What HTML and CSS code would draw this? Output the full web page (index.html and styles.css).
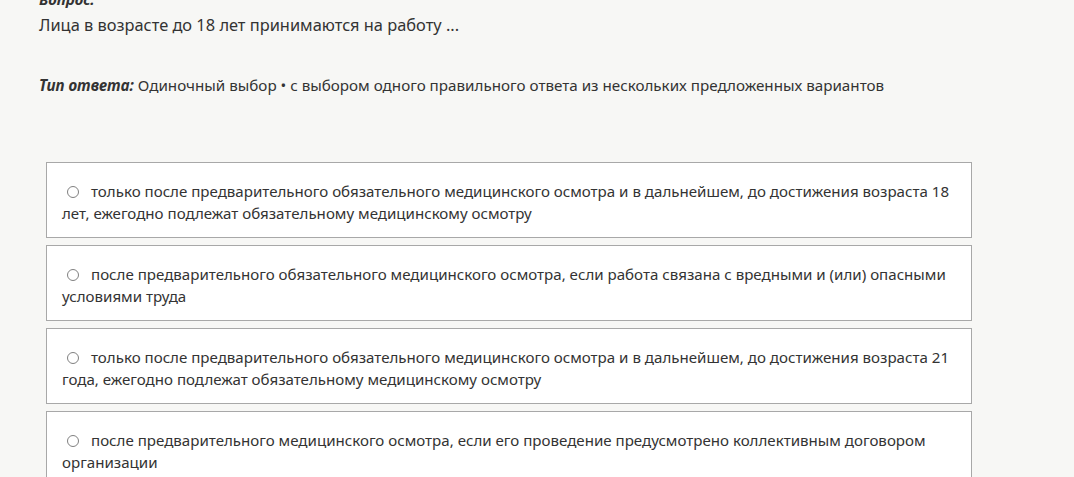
FILE: index.html
```html
<!DOCTYPE html>
<html lang="ru">
<head>
<meta charset="utf-8">
<title>Вопрос</title>
<link rel="stylesheet" href="styles.css">
</head>
<body>
<main class="quiz">
  <section class="question">
    <div class="label">Вопрос:</div>
    <div class="text">Лица в возрасте до 18 лет принимаются на работу ...</div>
    <div class="kind"><span class="kind-label">Тип ответа:</span> Одиночный выбор • с выбором одного правильного ответа из нескольких предложенных вариантов</div>
  </section>
  <ul class="answers">
    <li class="answer"><span class="radio"></span>только после предварительного обязательного медицинского осмотра и в дальнейшем, до достижения возраста 18 лет, ежегодно подлежат обязательному медицинскому осмотру</li>
    <li class="answer"><span class="radio"></span>после предварительного обязательного медицинского осмотра, если работа связана с вредными и (или) опасными условиями труда</li>
    <li class="answer"><span class="radio"></span>только после предварительного обязательного медицинского осмотра и в дальнейшем, до достижения возраста 21 года, ежегодно подлежат обязательному медицинскому осмотру</li>
    <li class="answer"><span class="radio"></span>после предварительного медицинского осмотра, если его проведение предусмотрено коллективным договором организации</li>
  </ul>
</main>
</body>
</html>
```

FILE: styles.css
```css
html, body {
  margin: 0;
  background: #f7f7f5;
}

body {
  font-family: "Noto Sans", "Open Sans", sans-serif;
  font-size: 15.1px;
  line-height: 22px;
  color: #333;
  overflow: hidden;
}

.quiz {
  margin-top: -9px;
  padding: 0 102px 0 39px;
}

.label {
  font-weight: bold;
  font-style: italic;
  font-size: 15px;
  line-height: 16px;
}

.text {
  margin-top: 6px;
  font-size: 16.4px;
  line-height: 24px;
}

.kind {
  margin-top: 37px;
  font-size: 15.2px;
}

.kind-label {
  font-weight: bold;
  font-style: italic;
}

.answers {
  list-style: none;
  margin: 66px 0 0 7px;
  padding: 0;
  display: flex;
  flex-direction: column;
  gap: 7px;
}

.answer {
  background: #fff;
  border: 1px solid #a8a8a8;
  padding: 17px 15px 13px;
}

.radio {
  display: inline-block;
  width: 10px;
  height: 10px;
  border: 1.4px solid #808080;
  border-radius: 50%;
  margin: 0 12px 0 5px;
  vertical-align: -1px;
}
```
